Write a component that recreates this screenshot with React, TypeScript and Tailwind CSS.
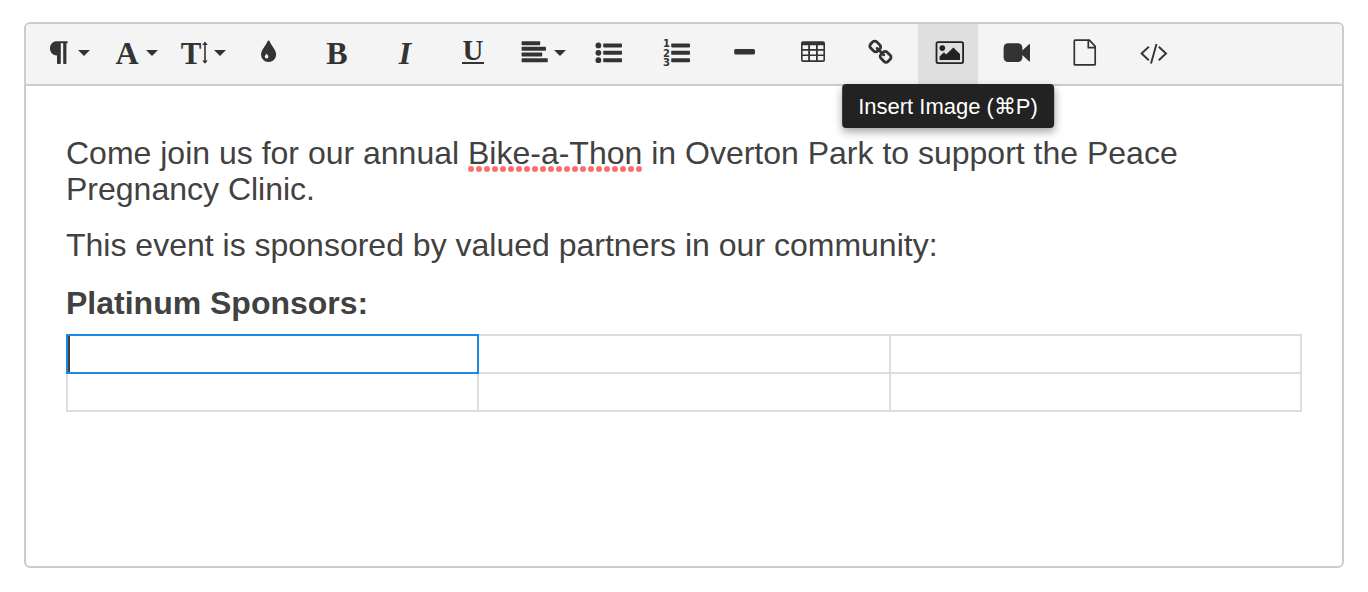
import React from 'react';
import clsx from 'clsx';

type Tool = {
  label: string;
  icon: React.ReactNode;
  menu?: boolean;
  active?: boolean;
  tooltip?: string;
};

const SERIF = '"Liberation Serif", serif';

function Letter({ x, y = 40, size = 32, italic, children }: { x: number; y?: number; size?: number; italic?: boolean; children: string }) {
  return (
    <text x={x} y={y} fontSize={size} fontWeight="bold" fontStyle={italic ? 'italic' : 'normal'} fontFamily={SERIF} textAnchor="middle">
      {children}
    </text>
  );
}

function Bars({ rows }: { rows: number[][] }) {
  return (
    <>
      {rows.map(([x, y, w]) => (
        <rect key={y} x={x} y={y} width={w} height="4" rx="0.8" />
      ))}
    </>
  );
}

// All icons are drawn on the 60x60 grid of a toolbar button
const tools: Tool[] = [
  {
    label: 'Paragraph Format',
    menu: true,
    icon: <path d="M23 17.3H33.2Q33.7 17.3 33.7 17.8V18.7Q33.7 19.2 33.2 19.2H32.4V39.3Q32.4 40 31.7 40H29.9Q29.2 40 29.2 39.3V19.2H26.8V39.3Q26.8 40 26.1 40H23.7Q23 40 23 39.3V31.4C19 31.2 16 28.4 16 24.4C16 20 19 17.3 23 17.3Z" />,
  },
  { label: 'Font Family', menu: true, icon: <Letter x={25}>A</Letter> },
  {
    label: 'Font Size',
    menu: true,
    icon: (
      <>
        <Letter x={21} size={31}>T</Letter>
        <path d="M35 17.6L37.8 21H35.8V36.4H37.8L35 39.8L32.2 36.4H34.2V21H32.2Z" />
      </>
    ),
  },
  {
    label: 'Colors',
    icon: (
      <path
        fillRule="evenodd"
        d="M30.6 16.4C31.2 16.4 31.6 16.8 31.8 17.5C33 21.6 38.1 25.6 38.1 30.5C38.1 34.7 34.8 38 30.6 38S23.1 34.7 23.1 30.5C23.1 25.6 28.2 21.6 29.4 17.5C29.6 16.8 30 16.4 30.6 16.4ZM28.6 29.5C28.4 30.6 26.8 31.4 26.8 32.8A1.8 1.8 0 0 0 30.4 32.8C30.4 31.4 28.8 30.6 28.6 29.5Z"
      />
    ),
  },
  { label: 'Bold', icon: <Letter x={31}>B</Letter> },
  { label: 'Italic', icon: <Letter x={31} italic>I</Letter> },
  {
    label: 'Underline',
    icon: (
      <>
        <Letter x={31} y={36} size={29}>U</Letter>
        <rect x="20" y="38" width="22" height="2" />
      </>
    ),
  },
  {
    label: 'Align',
    menu: true,
    icon: <Bars rows={[[11.6, 17.2, 18.6], [11.6, 22.8, 24.4], [11.6, 28.5, 20.6], [11.6, 34.2, 26.2]]} />,
  },
  {
    label: 'Unordered List',
    icon: (
      <>
        <circle cx="20.4" cy="21.4" r="2.9" />
        <circle cx="20.4" cy="28.8" r="2.9" />
        <circle cx="20.4" cy="36.2" r="2.9" />
        <Bars rows={[[25.2, 19.4, 18.8], [25.2, 26.8, 18.8], [25.2, 34.2, 18.8]]} />
      </>
    ),
  },
  {
    label: 'Ordered List',
    icon: (
      <>
        <g fontFamily='"DejaVu Sans", sans-serif' fontSize="10" fontWeight="bold" textAnchor="middle">
          <text x="20.5" y="23.3">1</text>
          <text x="20.5" y="32.500">2</text>
          <text x="20.5" y="41.700">3</text>
        </g>
        <Bars rows={[[25.2, 19.4, 18.8], [25.2, 26.8, 18.8], [25.2, 34.2, 18.8]]} />
      </>
    ),
  },
  { label: 'Insert Horizontal Line', icon: <rect x="20.2" y="25" width="20.8" height="5.6" rx="1.5" /> },
  {
    label: 'Insert Table',
    icon: (
      <path
        fillRule="evenodd"
        d="M21 17.2H41A2 2 0 0 1 43 19.2V36.1A2 2 0 0 1 41 38.1H21A2 2 0 0 1 19 36.1V19.2A2 2 0 0 1 21 17.2ZM20.6 21.2V25H26.2V21.2ZM28 21.2V25H34V21.2ZM35.8 21.2V25H41.4V21.2ZM20.6 26.7V30.4H26.2V26.7ZM28 26.7V30.4H34V26.7ZM35.8 26.7V30.4H41.4V26.7ZM20.6 32.1V36.2H26.2V32.1ZM28 32.1V36.2H34V32.1ZM35.8 32.1V36.2H41.4V32.1Z"
      />
    ),
  },
  {
    label: 'Insert Link',
    icon: (
      <path
        transform="translate(18.2 15.4) scale(0.0147)"
        d="M1456 1216q0-40-28-68l-208-208q-28-28-68-28-42 0-72 32 3 3 19 18.500t21.500 21.500 15 19 13 25.500 3.500 27.500q0 40-28 68t-68 28q-15 0-27.500-3.500t-25.500-13-19-15-21.500-21.500-18.500-19q-33 31-33 73 0 40 28 68l206 207q27 27 68 27 40 0 68-26l147-146q28-28 28-67zm-703-705q0-40-28-68l-206-207q-28-28-68-28-39 0-68 27l-147 146q-28 28-28 67 0 40 28 68l208 208q27 27 68 27 42 0 72-31-3-3-19-18.500t-21.500-21.500-15-19-13-25.500-3.500-27.500q0-40 28-68t68-28q15 0 27.500 3.500t25.500 13 19 15 21.500 21.500 18.500 19q33-31 33-73zm895 705q0 120-85 203l-147 146q-83 83-203 83-121 0-204-85l-206-207q-83-83-83-203 0-123 88-209l-88-88q-86 88-208 88-120 0-204-84l-208-208q-84-84-84-204t85-203l147-146q83-83 203-83 121 0 204 85l206 207q83 83 83 203 0 123-88 209l88 88q86-88 208-88 120 0 204 84l208 208q84 84 84 204z"
      />
    ),
  },
  {
    label: 'Insert Image',
    active: true,
    tooltip: 'Insert Image (⌘P)',
    icon: (
      <>
        <rect x="18.5" y="18.2" width="26.6" height="21" rx="1.6" fill="none" stroke="currentColor" strokeWidth="1.8" />
        <circle cx="24.3" cy="24.1" r="2.8" />
        <path d="M21.600 36V32.400L26 28.300L28.100 30.400L35.400 23.400L42 30V36Z" />
      </>
    ),
  },
  {
    label: 'Insert Video',
    icon: (
      <>
        <rect x="17.6" y="19.300" width="18.800" height="18.700" rx="4.400" />
        <path d="M36 26.800L43 20.200Q44 19.500 44 20.800V36.700Q44 38 43 37.200L36 30.700Z" />
      </>
    ),
  },
  {
    label: 'Upload File',
    icon: (
      <path
        d="M21 16.200H35.400L41.200 22.300V40.200Q41.200 40.900 40.500 40.900H21Q20.300 40.900 20.300 40.200V16.900Q20.300 16.200 21 16.200ZM34.300 16.500V23.600H41"
        fill="none"
        stroke="currentColor"
        strokeWidth="1.700"
      />
    ),
  },
  {
    label: 'Code View',
    icon: <path d="M26.800 22.800L19.600 29.500L26.800 36.200M34.500 20L29 39.500M36.800 22.800L44 29.500L36.800 36.200" fill="none" stroke="currentColor" strokeWidth="1.900" />,
  },
];

function ToolButton({ label, icon, menu, active, tooltip }: Tool) {
  return (
    <div className="relative">
      <button
        type="button"
        aria-label={label}
        aria-haspopup={menu ? 'menu' : undefined}
        className={clsx('block size-[60px] cursor-pointer', active ? 'bg-[#dfdfdf] text-[#222222]' : 'text-[#333333] hover:bg-[#ebebeb]')}
      >
        <svg viewBox="0 0 60 60" className="size-full" fill="currentColor" aria-hidden="true">
          {icon}
          {menu && <path d="M44 26H56L50 32Z" />}
        </svg>
      </button>
      {tooltip && (
        <div
          role="tooltip"
          className="absolute top-full left-1/2 z-10 -translate-x-1/2 rounded bg-[#222222] px-4 pt-[7px] pb-[5px] text-[22px] leading-8 whitespace-nowrap text-white shadow-[0_4px_8px_rgba(0,0,0,0.35)]"
        >
          {tooltip}
        </div>
      )}
    </div>
  );
}

function SponsorTable() {
  return (
    <table className="w-full table-fixed border-collapse">
      <tbody>
        {[0, 1].map((row) => (
          <tr key={row}>
            {[0, 1, 2].map((col) => {
              const selected = row === 0 && col === 0;
              return (
                <td key={col} className={clsx('h-[38px] border-2 p-0', selected ? 'border-[#1e88e5]' : 'border-[#dddddd]')}>
                  {selected && <span className="block h-9 w-0.5 bg-[#414141]" />}
                </td>
              );
            })}
          </tr>
        ))}
      </tbody>
    </table>
  );
}

export default function App() {
  return (
    <main className="min-h-screen bg-white px-6 pt-[22px] pb-6 font-['Liberation_Sans',Arial,sans-serif]">
      <div className="rounded-md border-2 border-[#cccccc]">
        <div role="toolbar" aria-label="Formatting" className="flex flex-wrap gap-x-2 rounded-t border-b-2 border-[#cccccc] bg-[#f4f4f4] px-2">
          {tools.map((tool) => (
            <ToolButton key={tool.label} {...tool} />
          ))}
        </div>
        <div
          role="textbox"
          aria-multiline="true"
          aria-label="Event description"
          contentEditable
          suppressContentEditableWarning
          spellCheck={false}
          className="min-h-[480px] px-10 pt-[49px] pb-10 text-[32px] leading-9 text-[#414141] outline-none"
        >
          <p className="mb-5">
            Come join us for our annual{' '}
            <span className="bg-[radial-gradient(circle_at_3px_3px,#ff6b6b_2px,#ff9c9c_3px,transparent_3px)] bg-[length:8px_6px] bg-bottom-left bg-repeat-x pb-px">
              Bike-a-Thon
            </span>{' '}
            in Overton Park to support the Peace Pregnancy Clinic.
          </p>
          <p className="mb-[22px]">This event is sponsored by valued partners in our community:</p>
          <p className="mb-[13px]">
            <strong>Platinum Sponsors:</strong>
          </p>
          <SponsorTable />
        </div>
      </div>
    </main>
  );
}
